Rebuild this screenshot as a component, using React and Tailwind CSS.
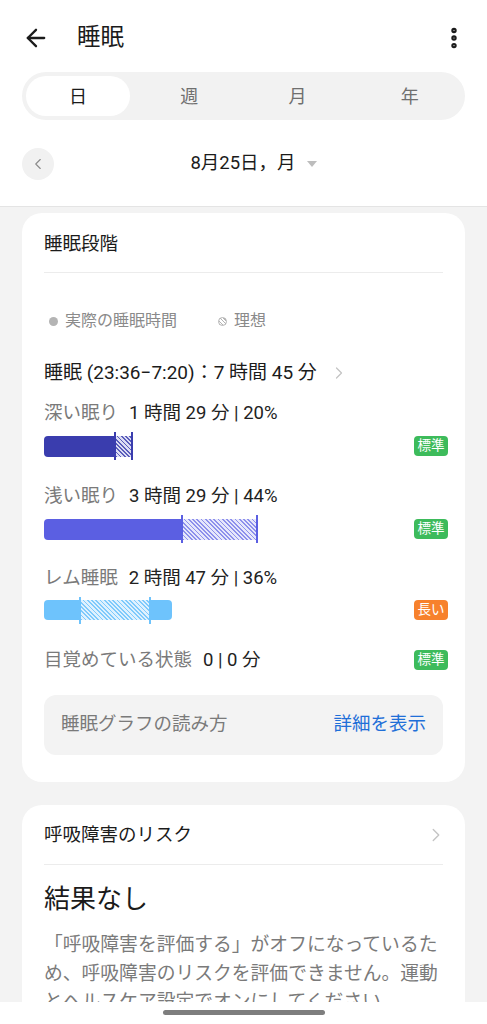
import { ArrowLeft, ChevronLeft, ChevronRight, EllipsisVertical } from "lucide-react";

const font = { fontFamily: 'Roboto, "Noto Sans CJK JP", sans-serif' };

function Tag({ label, tone }) {
  const bg = tone === "orange" ? "bg-[#f7812c]" : "bg-[#3dbb5b]";
  return (
    <span
      className={`-mr-[5px] flex h-[20px] w-[34px] items-center justify-center rounded-[4px] text-[13.5px] leading-none text-white ${bg}`}
    >
      {label}
    </span>
  );
}

function StageLabel({ name, value }) {
  return (
    <p className="flex items-center text-[18.5px] leading-[24px]">
      <span className="text-[#7a7a7a]">{name}</span>
      <span className="ml-[11px] text-[#222]">{value}</span>
    </p>
  );
}

function App() {
  return (
    <div
      className="relative h-[1024px] w-[487px] overflow-hidden bg-[#f3f3f3]"
      style={font}
    >
      {/* header */}
      <div className="border-b border-[#e4e4e4] bg-white pb-[26px] pt-[18px]">
        <div className="flex h-[40px] items-center px-[22px]">
          <ArrowLeft size={28} strokeWidth={2} className="text-[#1b1b1b]" />
          <h1 className="ml-[27px] text-[23.5px] leading-none text-[#1b1b1b]">睡眠</h1>
          <EllipsisVertical size={26} strokeWidth={3} className="ml-auto -mr-[2px] text-[#1b1b1b]" />
        </div>

        <div className="mx-[22px] mt-[14px] flex h-[48px] items-center rounded-full bg-[#f2f2f2] p-[4px]">
          <div className="flex h-[40px] w-[104px] items-center justify-center rounded-full bg-white text-[18px] text-[#1b1b1b]">
            日
          </div>
          <div className="flex flex-1 items-center justify-center pl-[8px] text-[18px] text-[#6f6f6f]">週</div>
          <div className="flex flex-1 items-center justify-center pl-[6px] text-[18px] text-[#6f6f6f]">月</div>
          <div className="flex flex-1 items-center justify-center pl-[10px] text-[18px] text-[#6f6f6f]">年</div>
        </div>

        <div className="mt-[28px] flex items-center px-[22px]">
          <div className="flex h-[32px] w-[32px] items-center justify-center rounded-full bg-[#f1f1f1]">
            <ChevronLeft size={18} strokeWidth={1.5} className="text-[#8a8a8a]" />
          </div>
          <div className="flex flex-1 items-center justify-center pl-[20px] pr-[32px]">
            <span className="text-[18.5px] text-[#1b1b1b]">8月25日，月</span>
            <span className="ml-[11px] h-0 w-0 border-x-[5px] border-t-[6px] border-x-transparent border-t-[#bdbdbd]" />
          </div>
        </div>
      </div>

      {/* sleep stages card */}
      <div className="mx-[22px] mt-[6px] rounded-[20px] bg-white px-[22px] pb-[27px] pt-[19px]">
        <h2 className="border-b border-[#ececec] pb-[16px] text-[18.5px] leading-[24px] text-[#1b1b1b]">
          睡眠段階
        </h2>

        <div className="mt-[38px] flex items-center text-[16px] leading-[20px] text-[#8a8a8a]">
          <span className="ml-[5px] h-[9px] w-[9px] rounded-full bg-[#b4b4b4]" />
          <span className="ml-[7px]">実際の睡眠時間</span>
          <span className="ml-[41px] h-[9px] w-[9px] rounded-full border border-[#b4b4b4] bg-[repeating-linear-gradient(45deg,#b4b4b4_0_1px,#ffffff_1px_2.5px)]" />
          <span className="ml-[7px]">理想</span>
        </div>

        <div className="mt-[30px] flex items-center text-[19px] leading-[24px] text-[#1b1b1b]">
          <span>睡眠 (23:36−7:20)：7 時間 45 分</span>
          <ChevronRight size={20} strokeWidth={1.5} className="ml-[12px] text-[#c4c4c4]" />
        </div>

        {/* deep */}
        <div className="mt-[16px]">
          <StageLabel name="深い眠り" value="1 時間 29 分 | 20%" />
          <div className="mt-[7px] flex h-[28px] items-center">
            <div className="h-[21px] w-[70px] rounded-l-[4px] bg-[#3a3dae]" />
            <div className="h-[28px] w-[2px] bg-[#3a3dae]" />
            <div className="h-[21px] w-[15px] bg-[repeating-linear-gradient(45deg,#5a5dbb_0_1.2px,#dcddf3_1.2px_3px)]" />
            <div className="h-[28px] w-[2px] bg-[#3a3dae]" />
            <div className="ml-auto">
              <Tag label="標準" />
            </div>
          </div>
        </div>

        {/* light */}
        <div className="mt-[24px]">
          <StageLabel name="浅い眠り" value="3 時間 29 分 | 44%" />
          <div className="mt-[7px] flex h-[28px] items-center">
            <div className="h-[21px] w-[137px] rounded-l-[4px] bg-[#5b5fe2]" />
            <div className="h-[28px] w-[2px] bg-[#5b5fe2]" />
            <div className="h-[21px] w-[73px] bg-[repeating-linear-gradient(45deg,#8d90ec_0_1.2px,#e6e7fb_1.2px_3px)]" />
            <div className="h-[28px] w-[2px] bg-[#5b5fe2]" />
            <div className="ml-auto">
              <Tag label="標準" />
            </div>
          </div>
        </div>

        {/* rem */}
        <div className="mt-[23px]">
          <StageLabel name="レム睡眠" value="2 時間 47 分 | 36%" />
          <div className="mt-[6px] flex h-[28px] items-center">
            <div className="h-[20px] w-[35px] rounded-l-[4px] bg-[#6ec3fc]" />
            <div className="h-[27px] w-[2px] bg-[#6ec3fc]" />
            <div className="h-[20px] w-[68px] bg-[repeating-linear-gradient(45deg,#7fcafc_0_1.2px,#dff1fe_1.2px_3px)]" />
            <div className="h-[27px] w-[2px] bg-[#6ec3fc]" />
            <div className="h-[20px] w-[21px] rounded-r-[4px] bg-[#6ec3fc]" />
            <div className="ml-auto">
              <Tag label="長い" tone="orange" />
            </div>
          </div>
        </div>

        {/* awake */}
        <div className="mt-[24px] flex items-center">
          <StageLabel name="目覚めている状態" value="0 | 0 分" />
          <div className="ml-auto">
            <Tag label="標準" />
          </div>
        </div>

        <div className="mt-[23px] flex h-[60px] items-center justify-between rounded-[12px] bg-[#f3f3f3] px-[17px]">
          <span className="text-[18.5px] text-[#7a7a7a]">睡眠グラフの読み方</span>
          <span className="text-[18.5px] text-[#1f6fd8]">詳細を表示</span>
        </div>
      </div>

      {/* breathing card */}
      <div className="mx-[22px] mt-[23px] rounded-[20px] bg-white px-[22px] pb-[30px] pt-[18px]">
        <div className="flex items-center border-b border-[#ececec] pb-[17px]">
          <h2 className="text-[18.5px] leading-[24px] text-[#1b1b1b]">呼吸障害のリスク</h2>
          <ChevronRight size={22} strokeWidth={1.5} className="ml-auto -mr-[4px] text-[#c4c4c4]" />
        </div>
        <p className="mt-[17px] text-[26px] leading-[34px] text-[#1b1b1b]">結果なし</p>
        <p className="mt-[15px] text-[18.8px] leading-[28.5px] text-[#7a7a7a]">
          「呼吸障害を評価する」がオフになっているため、呼吸障害のリスクを評価できません。運動とヘルスケア設定でオンにしてください。
        </p>
      </div>

      {/* gesture bar */}
      <div className="absolute bottom-0 left-0 right-0 flex h-[22px] justify-center bg-white pt-[8px]">
        <div className="h-[5px] w-[162px] rounded-full bg-[#7e7e7e]" />
      </div>
    </div>
  );
}

export default App;
